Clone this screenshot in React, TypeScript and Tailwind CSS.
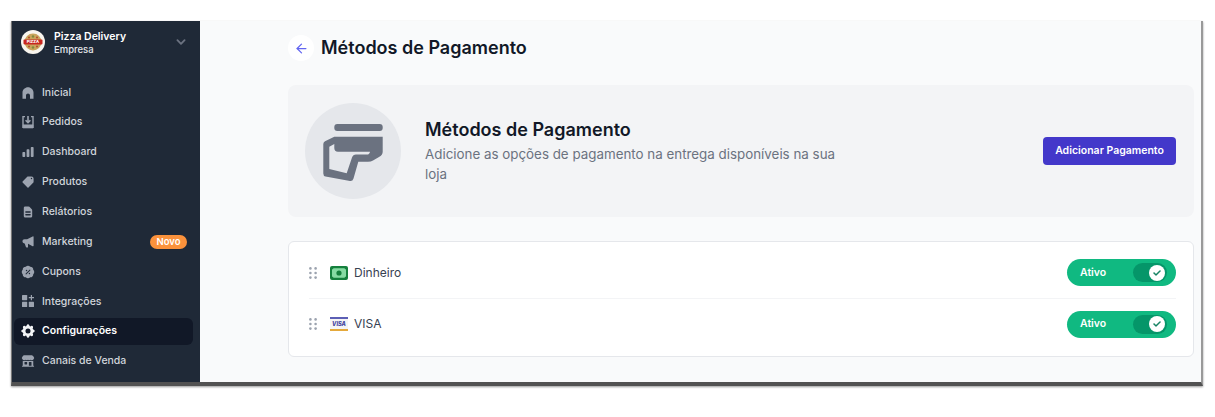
import { ArrowLeft } from 'lucide-react';
import { HiChartBar, HiChevronDown, HiCog, HiDocumentText, HiSpeakerphone, HiTag, HiCheck } from 'react-icons/hi';
import { HiBuildingStorefront, HiPercentBadge } from 'react-icons/hi2';
import type { ComponentType } from 'react';

function HomeIcon({ className }: { className?: string }) {
    return (
        <svg viewBox="0 0 14 14" fill="currentColor" className={className}>
            <path d="M7 1.2C9.8 1.2 12.5 3.6 12.5 6.6V12.8H9V9.4C9 8.2 8.1 7.4 7 7.4S5 8.2 5 9.4V12.8H1.5V6.6C1.5 3.6 4.2 1.2 7 1.2Z" />
        </svg>
    );
}

function InboxIcon({ className }: { className?: string }) {
    return (
        <svg viewBox="0 0 14 14" className={className} fill="none" stroke="currentColor">
            <path d="M4 1.6H2V12.4H12V1.6H10" strokeWidth="1.4" />
            <path d="M2 9.8H12V13H2Z" fill="currentColor" strokeWidth="0.6" />
            <path d="M7 1V7.4M4.6 5.2L7 7.6L9.4 5.2" strokeWidth="1.6" />
        </svg>
    );
}

function TagIcon({ className }: { className?: string }) {
    return <HiTag className={`-scale-x-100 ${className}`} />;
}

function GridAddIcon({ className }: { className?: string }) {
    return (
        <svg viewBox="0 0 14 14" fill="currentColor" className={className}>
            <rect x="1" y="1" width="5.2" height="5.2" rx="0.6" />
            <rect x="1" y="7.8" width="5.2" height="5.2" rx="0.6" />
            <rect x="7.8" y="7.8" width="5.2" height="5.2" rx="0.6" />
            <path d="M9.8 1H11V3H13V4.2H11V6.2H9.8V4.2H7.8V3H9.8Z" />
        </svg>
    );
}

function CogIcon({ className }: { className?: string }) {
    return <HiCog className={`scale-[1.2] ${className}`} />;
}

function CouponIcon({ className }: { className?: string }) {
    return <HiPercentBadge className={`scale-[1.1] ${className}`} />;
}

const navItems: { label: string; icon: ComponentType<{ className?: string }>; badge?: string; active?: boolean }[] = [
    { label: 'Inicial', icon: HomeIcon },
    { label: 'Pedidos', icon: InboxIcon },
    { label: 'Dashboard', icon: HiChartBar },
    { label: 'Produtos', icon: TagIcon },
    { label: 'Relátorios', icon: HiDocumentText },
    { label: 'Marketing', icon: HiSpeakerphone, badge: 'Novo' },
    { label: 'Cupons', icon: CouponIcon },
    { label: 'Integrações', icon: GridAddIcon },
    { label: 'Configurações', icon: CogIcon, active: true },
    { label: 'Canais de Venda', icon: HiBuildingStorefront },
];

function PizzaLogo() {
    return (
        <svg viewBox="0 0 24 24" className="w-6 h-6 shrink-0">
            <circle cx="12" cy="12" r="12" fill="#f8f5ee" />
            <circle cx="12" cy="12" r="8.5" fill="#c9a45c" />
            <circle cx="12" cy="6.5" r="1.2" fill="#7d8a3c" />
            <circle cx="8" cy="7.5" r="1" fill="#b5482c" />
            <circle cx="16" cy="7.5" r="1" fill="#b5482c" />
            <circle cx="12" cy="17.5" r="1.2" fill="#7d8a3c" />
            <circle cx="8" cy="16.5" r="1" fill="#b5482c" />
            <circle cx="16" cy="16.5" r="1" fill="#b5482c" />
            <rect x="2.5" y="9.6" width="19" height="4.8" rx="0.8" fill="#c8261f" />
            <text x="12" y="13.4" textAnchor="middle" fontSize="4" fontWeight="800" fill="#fff" fontFamily="Inter, sans-serif">PIZZA</text>
        </svg>
    );
}

function PaymentIcon() {
    return (
        <svg viewBox="0 0 96 96" className="w-24 h-24 shrink-0">
            <circle cx="48" cy="48" r="48" fill="#e5e7eb" />
            <rect x="29.3" y="21" width="48.4" height="7" rx="3" fill="#6b7280" />
            <path
                fillRule="evenodd"
                fill="#6b7280"
                d="M29.3 33.7H77.7V48.7Q77.7 52 74 54L68 57.5Q66 58.7 63 58.7H53.3L48.5 75.5Q47.6 78.4 45 78L20.5 73.5Q18.3 73 18.3 70.5V41Q18.3 39.2 20 38.2ZM24.3 43.7V66L41.7 70.3L47 54.5Q48 51.5 51 51.5H62Q64.5 51.5 65 48.7H33Q29.3 48.7 29.3 45V41Z"
            />
        </svg>
    );
}

function DragHandle() {
    return (
        <svg viewBox="0 0 8 12" className="w-2 h-3 shrink-0 fill-[#9ca3af]">
            <circle cx="1.4" cy="1.4" r="1.3" />
            <circle cx="6.6" cy="1.4" r="1.3" />
            <circle cx="1.4" cy="6" r="1.3" />
            <circle cx="6.6" cy="6" r="1.3" />
            <circle cx="1.4" cy="10.6" r="1.3" />
            <circle cx="6.6" cy="10.6" r="1.3" />
        </svg>
    );
}

function CashIcon() {
    return (
        <svg viewBox="0 0 18 14" className="w-[18px] h-[14px] shrink-0">
            <rect width="18" height="14" rx="2" fill="#15803d" />
            <path d="M3.5 2.2H14.5Q14.8 3.2 16 3.5V10.5Q14.8 10.8 14.5 11.8H3.5Q3.2 10.8 2 10.5V3.5Q3.2 3.2 3.5 2.2Z" fill="#86dba3" />
            <circle cx="9" cy="7" r="2.6" fill="#15803d" />
        </svg>
    );
}

function VisaIcon() {
    return (
        <svg viewBox="0 0 18 14" className="w-[18px] h-[14px] shrink-0">
            <rect width="18" height="14" fill="#f5f5f5" />
            <rect width="18" height="2" fill="#5c5fb5" />
            <rect y="12" width="18" height="2" fill="#e5a93b" />
            <text x="9" y="9.4" textAnchor="middle" fontSize="5.6" fontWeight="800" fontStyle="italic" fill="#3f429e" fontFamily="Inter, sans-serif">VISA</text>
        </svg>
    );
}

function StatusToggle() {
    return (
        <button className="w-[109px] h-[27px] rounded-full bg-[#10b981] flex items-center justify-between pl-[13px] pr-[9px] text-[10.5px] font-semibold text-white">
            <span>Ativo</span>
            <span className="w-[34px] h-[19px] rounded-full bg-[#059669] flex items-center justify-end pr-[2px]">
                <span className="w-4 h-4 rounded-full bg-white flex items-center justify-center">
                    <HiCheck className="w-[10px] h-[10px] text-[#047857] stroke-[#047857] stroke-1" />
                </span>
            </span>
        </button>
    );
}

export default function App() {
    return (
        <div className="w-[1215px] h-[417px] bg-white pt-[21px] pl-[11px] font-['Inter',sans-serif]">
            <div className="w-[1192px] h-[365px] flex overflow-hidden bg-[#f9fafb] border-l border-l-[#777] border-r-2 border-r-[#999] border-b-4 border-b-[#525252] shadow-[0_1px_2px_rgba(0,0,0,0.4)]">
                {/* Sidebar */}
                <aside className="w-[188px] shrink-0 bg-[#1f2937] pl-[2px] pr-[7px]">
                    <div className="h-[42px] flex items-center pl-[7px] pr-[3px]">
                        <PizzaLogo />
                        <div className="ml-[9px] flex-1 pt-[1px]">
                            <div className="text-[10.5px] leading-[14px] font-semibold text-white">Pizza Delivery</div>
                            <div className="text-[9.5px] leading-[12px] font-medium text-[#e5e7eb]">Empresa</div>
                        </div>
                        <HiChevronDown className="w-[18px] h-[18px] text-[#6b7280]" />
                    </div>
                    <nav className="mt-[16px] flex flex-col gap-[2.85px]">
                        {navItems.map(({ label, icon: Icon, badge, active }) => (
                            <a
                                key={label}
                                className={`h-[27px] flex items-center rounded-md pl-[7px] pr-[6px] text-[10.5px] ${active ? 'bg-[#111827] text-white font-semibold' : 'text-[#d1d5db] font-medium'}`}
                            >
                                <Icon className={`w-[14px] h-[14px] shrink-0 ${active ? 'text-[#f3f4f6]' : 'text-[#9ca3af]'}`} />
                                <span className="ml-[7px] flex-1">{label}</span>
                                {badge && (
                                    <span className="h-[14px] w-[37px] rounded-full bg-[#fb923c] flex items-center justify-center text-[9.5px] font-semibold text-white">{badge}</span>
                                )}
                            </a>
                        ))}
                    </nav>
                </aside>

                {/* Content */}
                <main className="flex-1 pl-[88px] pr-[7px] pt-[14px]">
                    <div className="flex items-center gap-[7px] h-[26px]">
                        <span className="w-[26px] h-[26px] rounded-full bg-white flex items-center justify-center">
                            <ArrowLeft className="w-[15px] h-[15px] text-[#6366f1]" />
                        </span>
                        <h1 className="text-lg font-semibold text-[#111827]">Métodos de Pagamento</h1>
                    </div>

                    <section className="mt-6 h-[132px] rounded-lg bg-[#f3f4f6] flex items-center pl-[17px] pr-[18px]">
                        <PaymentIcon />
                        <div className="ml-6 flex-1">
                            <h2 className="text-lg leading-[23px] font-semibold text-[#111827]">Métodos de Pagamento</h2>
                            <p className="mt-[3px] w-[430px] text-[13.37px] leading-5 text-[#6b7280]">
                                Adicione as opções de pagamento na entrega disponíveis na sua loja
                            </p>
                        </div>
                        <button className="w-[133px] h-7 rounded bg-[#4338ca] text-[10.5px] font-semibold text-white">Adicionar Pagamento</button>
                    </section>

                    <section className="mt-6 h-[116px] rounded-md bg-white border border-[#e5e7eb] pl-[20px] pr-[17px] pt-[5px]">
                        <div className="h-[52px] flex items-center border-b border-[#f3f4f6]">
                            <DragHandle />
                            <span className="ml-[13px]"><CashIcon /></span>
                            <span className="ml-[6px] flex-1 text-xs text-[#374151]">Dinheiro</span>
                            <StatusToggle />
                        </div>
                        <div className="h-[50px] flex items-center">
                            <DragHandle />
                            <span className="ml-[13px]"><VisaIcon /></span>
                            <span className="ml-[6px] flex-1 text-xs text-[#374151]">VISA</span>
                            <StatusToggle />
                        </div>
                    </section>
                </main>
            </div>
        </div>
    );
}
